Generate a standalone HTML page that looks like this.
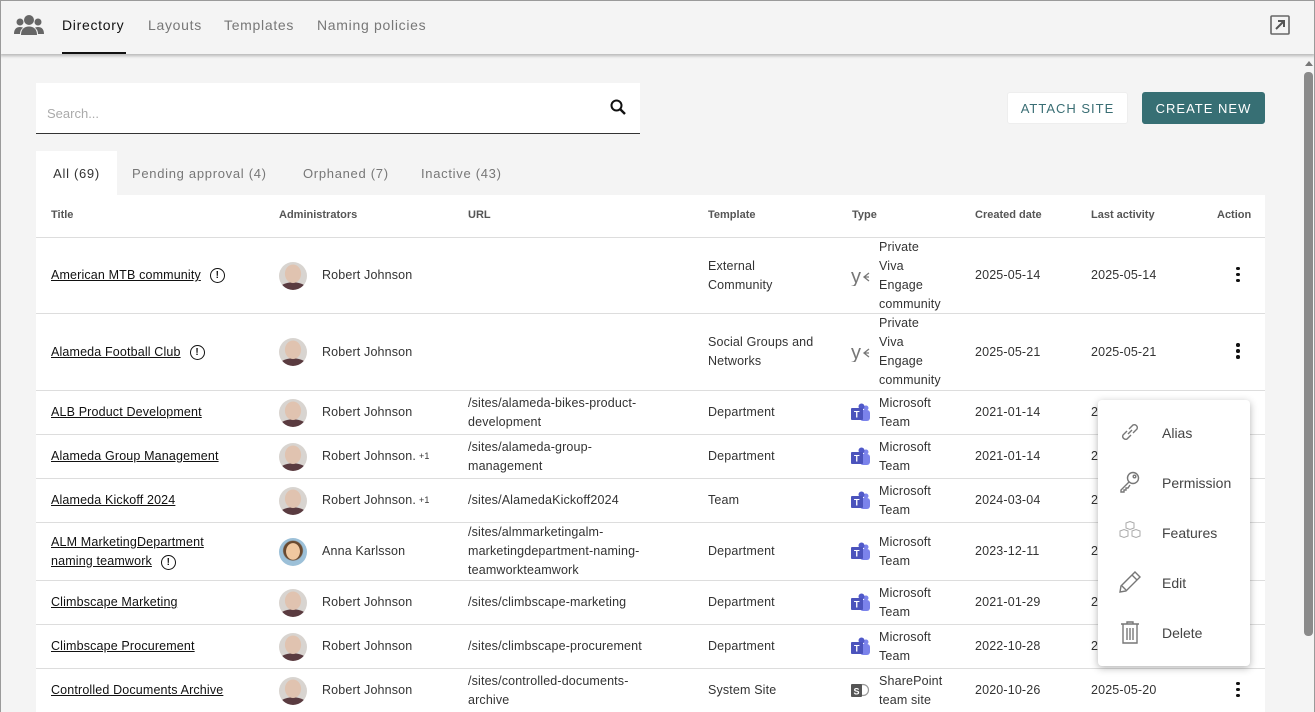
<!DOCTYPE html>
<html><head><meta charset="utf-8"><style>
*{box-sizing:border-box;margin:0;padding:0}
body{width:1315px;height:712px;overflow:hidden;background:#f4f4f4;font-family:"Liberation Sans",sans-serif;color:#222;position:relative}
.frame{position:absolute;inset:0;border:1px solid #9a9a9a;border-bottom:none;pointer-events:none;z-index:20}
.hdr{position:absolute;left:0;top:0;width:1315px;height:54px;background:#f4f4f4;box-shadow:0 2px 3px rgba(0,0,0,.25);z-index:5}
.nav{position:absolute;top:17px;font-size:14px;letter-spacing:.7px;color:#777}
.search{position:absolute;left:36px;top:83px;width:604px;height:51px;background:#fff;border-bottom:1px solid #333}
.search span{position:absolute;left:11px;top:23px;font-size:13px;color:#aaa}
.btn{position:absolute;top:92px;height:32px;font-size:13px;letter-spacing:1px;display:flex;align-items:center;justify-content:center;border-radius:3px}
.tab{position:absolute;top:151px;height:44px;font-size:13px;letter-spacing:.7px;color:#777;display:flex;align-items:center}
.tbl{position:absolute;left:36px;top:195px;width:1229px;height:517px;background:#fff}
.th{position:absolute;top:209px;font-size:11px;font-weight:bold;color:#555}
.row{position:absolute;left:36px;width:1229px;border-top:1px solid #ddd}
.c{position:absolute;top:0;bottom:0;display:flex;align-items:center;font-size:12.5px;line-height:19px;color:#333;letter-spacing:.15px}
.t a{color:#111;text-decoration:underline}
.ex{display:inline-block;width:15px;height:15px;border:1.3px solid #111;border-radius:50%;font-size:10px;font-weight:bold;text-align:center;line-height:13px;margin-left:9px;color:#111}
.av{width:28px;height:28px;border-radius:50%;margin-right:15px;background:radial-gradient(ellipse 35% 40% at 50% 42%,#e0c3b0 0 80%,transparent 85%),radial-gradient(ellipse 60% 35% at 50% 105%,#5a3b40 0 90%,transparent 95%),#d8d4d0}
.dots{position:absolute;left:1200px;width:4px}
.dots i{display:block;width:3.5px;height:3.5px;border-radius:50%;background:#111;margin-bottom:2.5px}
.menu{position:absolute;left:1098px;top:400px;width:152px;height:266px;background:#fff;border-radius:4px;box-shadow:0 2px 8px rgba(0,0,0,.3);z-index:10}
.mi{position:absolute;left:64px;font-size:14px;color:#444}
.mic{position:absolute;left:20px}
</style></head><body>
<div class="frame"></div>
<div class="hdr">
<svg style="position:absolute;left:14px;top:14px" width="30" height="22" viewBox="0 0 30 22"><g fill="#666"><circle cx="15" cy="6" r="5"/><circle cx="6" cy="8" r="3.5"/><circle cx="24" cy="8" r="3.5"/><path d="M7 21c0-6 3.5-8.5 8-8.5s8 2.5 8 8.5z"/><path d="M0 20c0-5 2.5-7 6-7 1.5 0 2.5.4 3 .8-2 1.5-3 3.5-3 6.2z"/><path d="M30 20c0-5-2.5-7-6-7-1.5 0-2.5.4-3 .8 2 1.5 3 3.5 3 6.2z"/></g></svg>
<div class="nav" style="left:62px;color:#111">Directory</div>
<div style="position:absolute;left:62px;top:52px;width:64px;height:2px;background:#111"></div>
<div class="nav" style="left:148px">Layouts</div>
<div class="nav" style="left:224px">Templates</div>
<div class="nav" style="left:317px">Naming policies</div>
<svg style="position:absolute;left:1270px;top:15px" width="20" height="20" viewBox="0 0 20 20"><rect x="1" y="1" width="18" height="18" fill="none" stroke="#666" stroke-width="1.6" rx="1"/><path d="M6 14L14 6M8 6h6v6" stroke="#555" stroke-width="2" fill="none"/></svg>
</div>
<div style="position:absolute;left:1304px;top:60px;width:10px;height:652px;background:#f4f4f4"></div>
<div style="position:absolute;left:1305px;top:61px;width:0;height:0;border-left:4px solid transparent;border-right:4px solid transparent;border-bottom:5px solid #777"></div>
<div style="position:absolute;left:1304px;top:72px;width:9px;height:564px;background:#8a8a8a;border-radius:4px"></div>

<div class="search"><span>Search...</span>
<svg style="position:absolute;left:574px;top:16px" width="16" height="16" viewBox="0 0 16 16"><circle cx="6.5" cy="6.5" r="5" stroke="#111" stroke-width="2" fill="none"/><path d="M10 10l5 5" stroke="#111" stroke-width="2.4"/></svg></div>
<div class="btn" style="left:1007px;width:121px;background:#fff;color:#3a6e74;border:1px solid #eee">ATTACH SITE</div>
<div class="btn" style="left:1142px;width:123px;background:#376f74;color:#fff">CREATE NEW</div>

<div class="tab" style="left:36px;width:81px;background:#fff;color:#333;justify-content:center">All (69)</div>
<div class="tab" style="left:132px">Pending approval (4)</div>
<div class="tab" style="left:303px">Orphaned (7)</div>
<div class="tab" style="left:421px">Inactive (43)</div>

<div class="tbl"></div>
<div class="th" style="left:51px">Title</div>
<div class="th" style="left:279px">Administrators</div>
<div class="th" style="left:468px">URL</div>
<div class="th" style="left:708px">Template</div>
<div class="th" style="left:852px">Type</div>
<div class="th" style="left:975px">Created date</div>
<div class="th" style="left:1091px">Last activity</div>
<div class="th" style="left:1217px">Action</div>

<svg width="0" height="0" style="position:absolute"><defs>
<g id="viva"><text x="0" y="17" font-family="Liberation Sans" font-size="20" fill="#777">y</text><path d="M18 7l-5 4 5 4M13 11h5" stroke="#777" stroke-width="1.3" fill="none"/></g>
<g id="teams"><circle cx="16" cy="5" r="2.5" fill="#7b83eb"/><circle cx="11.5" cy="3.5" r="3" fill="#5059c9"/><rect x="10" y="7" width="10" height="11" rx="3" fill="#7b83eb"/><rect x="1" y="5" width="12" height="12" rx="1" fill="#4b53bc"/><text x="4" y="14.5" font-size="9" font-weight="bold" fill="#fff" font-family="Liberation Sans">T</text></g>
<g id="sp"><circle cx="13" cy="9" r="5.5" fill="none" stroke="#999" stroke-width="1.2"/><rect x="1" y="3" width="11" height="13" rx="1" fill="#555"/><text x="3.5" y="13.5" font-size="9" font-weight="bold" fill="#fff" font-family="Liberation Sans">S</text></g>
</defs></svg>

<div class="row" style="top:237px;height:76px">
<div class="c t" style="left:15px"><a>American MTB community</a><span class="ex">!</span></div>
<div class="c" style="left:243px"><span class="av"></span>Robert Johnson</div>
<div class="c" style="left:672px">External<br>Community</div>
<div class="c" style="left:815px"><svg width="22" height="20"><use href="#viva"/></svg></div>
<div class="c" style="left:843px">Private<br>Viva<br>Engage<br>community</div>
<div class="c" style="left:939px">2025-05-14</div>
<div class="c" style="left:1055px">2025-05-14</div>
<div class="c dots"><div><i></i><i></i><i></i></div></div>
</div>
<div class="row" style="top:313px;height:77px">
<div class="c t" style="left:15px"><a>Alameda Football Club</a><span class="ex">!</span></div>
<div class="c" style="left:243px"><span class="av"></span>Robert Johnson</div>
<div class="c" style="left:672px">Social Groups and<br>Networks</div>
<div class="c" style="left:815px"><svg width="22" height="20"><use href="#viva"/></svg></div>
<div class="c" style="left:843px">Private<br>Viva<br>Engage<br>community</div>
<div class="c" style="left:939px">2025-05-21</div>
<div class="c" style="left:1055px">2025-05-21</div>
<div class="c dots"><div><i></i><i></i><i></i></div></div>
</div>
<div class="row" style="top:390px;height:44px">
<div class="c t" style="left:15px"><a>ALB Product Development</a></div>
<div class="c" style="left:243px"><span class="av"></span>Robert Johnson</div>
<div class="c" style="left:432px">/sites/alameda-bikes-product-<br>development</div>
<div class="c" style="left:672px">Department</div>
<div class="c" style="left:814px"><svg width="21" height="19"><use href="#teams"/></svg></div>
<div class="c" style="left:843px">Microsoft<br>Team</div>
<div class="c" style="left:939px">2021-01-14</div>
<div class="c" style="left:1055px">2021-01-14</div>
</div>
<div class="row" style="top:434px;height:44px">
<div class="c t" style="left:15px"><a>Alameda Group Management</a></div>
<div class="c" style="left:243px"><span class="av"></span>Robert Johnson. <sup style="font-size:9px;margin-left:3px">+1</sup></div>
<div class="c" style="left:432px">/sites/alameda-group-<br>management</div>
<div class="c" style="left:672px">Department</div>
<div class="c" style="left:814px"><svg width="21" height="19"><use href="#teams"/></svg></div>
<div class="c" style="left:843px">Microsoft<br>Team</div>
<div class="c" style="left:939px">2021-01-14</div>
<div class="c" style="left:1055px">2021-01-14</div>
</div>
<div class="row" style="top:478px;height:44px">
<div class="c t" style="left:15px"><a>Alameda Kickoff 2024</a></div>
<div class="c" style="left:243px"><span class="av"></span>Robert Johnson. <sup style="font-size:9px;margin-left:3px">+1</sup></div>
<div class="c" style="left:432px">/sites/AlamedaKickoff2024</div>
<div class="c" style="left:672px">Team</div>
<div class="c" style="left:814px"><svg width="21" height="19"><use href="#teams"/></svg></div>
<div class="c" style="left:843px">Microsoft<br>Team</div>
<div class="c" style="left:939px">2024-03-04</div>
<div class="c" style="left:1055px">2024-03-04</div>
</div>
<div class="row" style="top:522px;height:58px">
<div class="c t" style="left:15px"><div><a>ALM MarketingDepartment</a><br><a>naming teamwork</a><span class="ex">!</span></div></div>
<div class="c" style="left:243px"><span class="av" style="background:radial-gradient(ellipse 30% 36% at 50% 48%,#f0c8a0 0 80%,transparent 85%),radial-gradient(circle at 50% 45%,#6a4a30 0 45%,transparent 50%),#9cc0d8"></span>Anna Karlsson</div>
<div class="c" style="left:432px">/sites/almmarketingalm-<br>marketingdepartment-naming-<br>teamworkteamwork</div>
<div class="c" style="left:672px">Department</div>
<div class="c" style="left:814px"><svg width="21" height="19"><use href="#teams"/></svg></div>
<div class="c" style="left:843px">Microsoft<br>Team</div>
<div class="c" style="left:939px">2023-12-11</div>
<div class="c" style="left:1055px">2023-12-11</div>
</div>
<div class="row" style="top:580px;height:44px">
<div class="c t" style="left:15px"><a>Climbscape Marketing</a></div>
<div class="c" style="left:243px"><span class="av"></span>Robert Johnson</div>
<div class="c" style="left:432px">/sites/climbscape-marketing</div>
<div class="c" style="left:672px">Department</div>
<div class="c" style="left:814px"><svg width="21" height="19"><use href="#teams"/></svg></div>
<div class="c" style="left:843px">Microsoft<br>Team</div>
<div class="c" style="left:939px">2021-01-29</div>
<div class="c" style="left:1055px">2021-01-29</div>
</div>
<div class="row" style="top:624px;height:44px">
<div class="c t" style="left:15px"><a>Climbscape Procurement</a></div>
<div class="c" style="left:243px"><span class="av"></span>Robert Johnson</div>
<div class="c" style="left:432px">/sites/climbscape-procurement</div>
<div class="c" style="left:672px">Department</div>
<div class="c" style="left:814px"><svg width="21" height="19"><use href="#teams"/></svg></div>
<div class="c" style="left:843px">Microsoft<br>Team</div>
<div class="c" style="left:939px">2022-10-28</div>
<div class="c" style="left:1055px">2022-10-28</div>
</div>
<div class="row" style="top:668px;height:44px">
<div class="c t" style="left:15px"><a>Controlled Documents Archive</a></div>
<div class="c" style="left:243px"><span class="av"></span>Robert Johnson</div>
<div class="c" style="left:432px">/sites/controlled-documents-<br>archive</div>
<div class="c" style="left:672px">System Site</div>
<div class="c" style="left:814px"><svg width="21" height="19"><use href="#sp"/></svg></div>
<div class="c" style="left:843px">SharePoint<br>team site</div>
<div class="c" style="left:939px">2020-10-26</div>
<div class="c" style="left:1055px">2025-05-20</div>
<div class="c dots"><div><i></i><i></i><i></i></div></div>
</div>

<div class="menu">
<svg class="mic" style="top:20px" width="24" height="24" viewBox="0 0 24 24" fill="none" stroke="#777" stroke-width="1.4"><path d="M10 14l4-4"/><path d="M9 11l-4 4a3 3 0 004 4l4-4"/><path d="M15 13l4-4a3 3 0 00-4-4l-4 4"/></svg>
<div class="mi" style="top:25px">Alias</div>
<svg class="mic" style="top:70px" width="24" height="24" viewBox="0 0 24 24" fill="none" stroke="#777" stroke-width="1.4"><circle cx="15" cy="8" r="5.5"/><circle cx="16.5" cy="6.5" r="1.3"/><path d="M11 12L3 20v2h3v-2h2v-2h2l2-3"/></svg>
<div class="mi" style="top:75px">Permission</div>
<svg class="mic" style="top:121px" width="24" height="22" viewBox="0 0 24 22" fill="none" stroke="#aaa" stroke-width="1"><path d="M8 2l4-1.5 4 1.5v5l-4 1.5-4-1.5z"/><path d="M2 10l4-1.5 4 1.5v5l-4 1.5-4-1.5z"/><path d="M14 10l4-1.5 4 1.5v5l-4 1.5-4-1.5z"/></svg>
<div class="mi" style="top:125px">Features</div>
<svg class="mic" style="top:170px" width="24" height="24" viewBox="0 0 24 24" fill="none" stroke="#777" stroke-width="1.4"><path d="M17 2l5 5L8 21l-6 1 1-6z"/><path d="M14 5l5 5M4 16l4 4"/></svg>
<div class="mi" style="top:175px">Edit</div>
<svg class="mic" style="top:220px" width="24" height="24" viewBox="0 0 24 24" fill="none" stroke="#777" stroke-width="1.4"><path d="M3 4h18M9 4V2h6v2M5 4v19h14V4M9 8v12M12 8v12M15 8v12"/></svg>
<div class="mi" style="top:225px">Delete</div>
</div>
</body></html>
